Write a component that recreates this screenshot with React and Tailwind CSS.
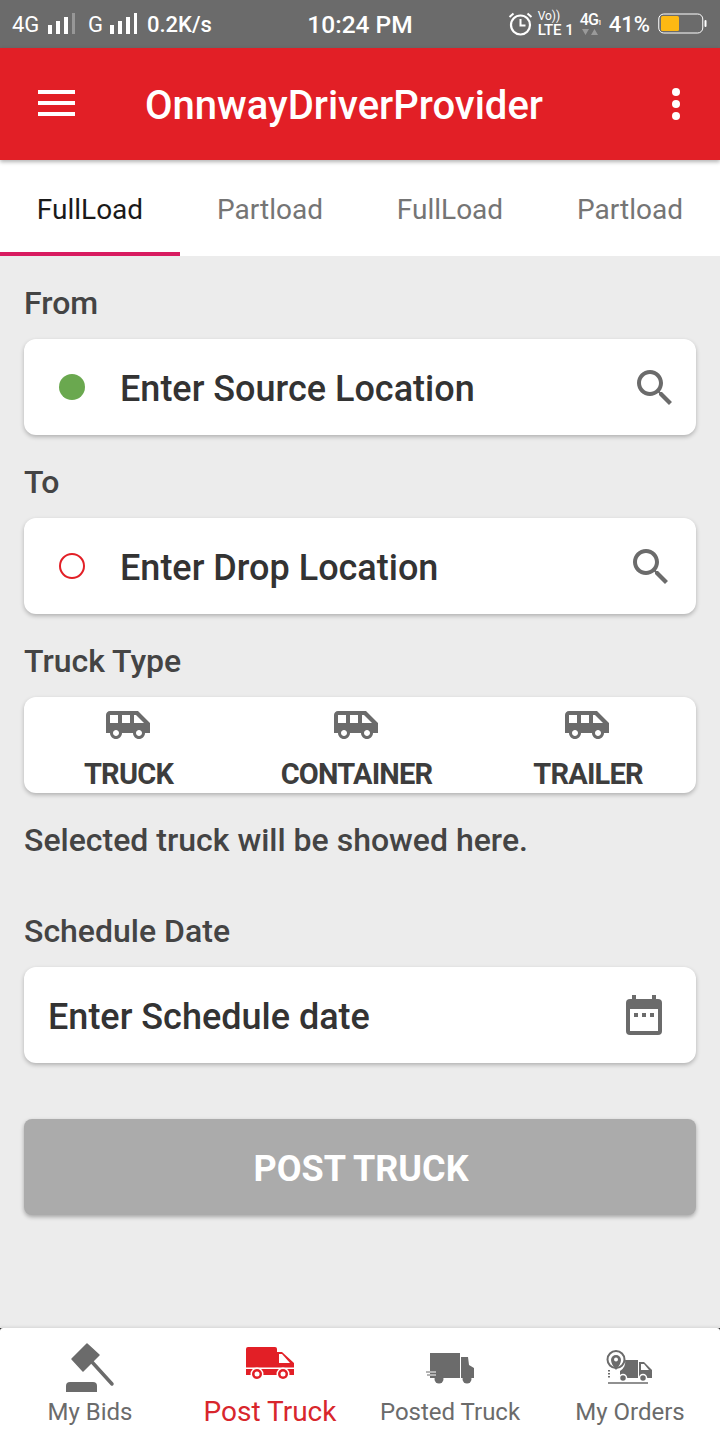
const SEARCH_PATH = 'M15.5 14h-.79l-.28-.27C15.41 12.59 16 11.11 16 9.5 16 5.91 13.09 3 9.5 3S3 5.91 3 9.5 5.91 16 9.5 16c1.61 0 3.09-.59 4.23-1.57l.27.28v.79l5 4.99L20.49 19l-4.99-5zm-6 0C7.01 14 5 11.99 5 9.5S7.01 5 9.5 5 14 7.01 14 9.5 11.99 14 9.5 14z'
const SHUTTLE_PATH = 'M17 5H3c-1.1 0-2 .89-2 2v9h2c0 1.65 1.34 3 3 3s3-1.35 3-3h5.5c0 1.65 1.34 3 3 3s3-1.35 3-3H23v-5l-6-6zM3 11V7h4v4H3zm3 6.5c-.83 0-1.5-.67-1.5-1.5s.67-1.5 1.5-1.5 1.5.67 1.5 1.5-.67 1.5-1.5 1.5zm7-6.5H9V7h4v4zm4.5 6.5c-.83 0-1.5-.67-1.5-1.5s.67-1.5 1.5-1.5 1.5.67 1.5 1.5-.67 1.5-1.5 1.5zM15 11V7h1l4 4h-5z'

const TABS = ['FullLoad', 'Partload', 'FullLoad', 'Partload']

function SignalBars({ dim }) {
  return (
    <svg width="28" height="22" viewBox="0 0 28 22" fill="#fff">
      <rect x="0" y="12" width="4" height="9" />
      <rect x="8" y="8" width="4" height="13" />
      <rect x="16" y="4" width="4" height="17" />
      <rect x="24" y="0" width="3" height="21" fillOpacity={dim ? 0.3 : 1} />
    </svg>
  )
}

function StatusBar() {
  return (
    <div className="h-12 bg-[#6b6b6b] text-white grid grid-cols-[1fr_auto_1fr] items-center shrink-0">
      <div className="flex items-center pl-3 text-[22px] font-medium">
        <span className="font-normal w-[28px]">4G</span>
        <span className="ml-2"><SignalBars dim /></span>
        <span className="ml-3 font-normal w-[14px]">G</span>
        <span className="ml-2"><SignalBars /></span>
        <span className="ml-[9px]">0.2K/s</span>
      </div>
      <div className="text-[24.5px] font-medium pt-[2px]">10:24 PM</div>
      <div className="flex items-center justify-end pr-3">
        <svg width="25" height="26" viewBox="0 0 25 26" fill="none" stroke="#fff">
          <circle cx="12.5" cy="14" r="9.5" strokeWidth="2.2" />
          <path d="M12.5 8v6.5h5M1.5 6l4-3.5M23.5 6l-4-3.5" strokeWidth="2" />
        </svg>
        <div className="ml-[5px] flex flex-col leading-none">
          <span className="text-[12px] h-[13px]">Vo))</span>
          <span className="text-[15px] font-medium">LTE 1</span>
        </div>
        <div className="ml-[6px] flex flex-col items-center leading-none">
          <span className="text-[16px] font-medium tracking-[-1px]">4G<span className="text-[7px]">1</span></span>
          <svg width="16" height="8" viewBox="0 0 16 8" fill="#9a9a9a">
            <path d="M0 1h7L3.5 7zM9 7h7l-3.5-6z" />
          </svg>
        </div>
        <span className="ml-2 text-[22px] font-medium">41%</span>
        <svg className="ml-2" width="50" height="22" viewBox="0 0 50 22">
          <rect x="0.75" y="1" width="44" height="19" rx="5" fill="none" stroke="#fff" strokeWidth="1" />
          <rect x="3" y="3" width="18" height="15" rx="1.5" fill="#fdb913" />
          <rect x="46.5" y="7" width="2" height="7" rx="1" fill="#fff" />
        </svg>
      </div>
    </div>
  )
}

function AppBar() {
  return (
    <div className="h-28 bg-[#e21f26] text-white flex items-center relative z-10 shadow-[0_2px_4px_rgba(0,0,0,0.3)] shrink-0">
      <div className="ml-[38px] mb-[2px] w-[37px] flex flex-col gap-[7px]">
        <span className="h-1 bg-white" />
        <span className="h-1 bg-white" />
        <span className="h-1 bg-white" />
      </div>
      <div className="ml-[70px] pt-1 text-[40px] font-medium">OnnwayDriverProvider</div>
      <div className="ml-auto mr-10 flex flex-col gap-[4px]">
        <span className="w-2 h-2 rounded-full bg-white" />
        <span className="w-2 h-2 rounded-full bg-white" />
        <span className="w-2 h-2 rounded-full bg-white" />
      </div>
    </div>
  )
}

function SearchIcon({ className }) {
  return (
    <svg className={className} width="35" height="35" viewBox="3 3 17.5 17.5" fill="#6b6b6b">
      <path d={SEARCH_PATH} />
    </svg>
  )
}

function LocationField({ marker, text, searchClass }) {
  return (
    <div className="h-24 bg-white rounded-xl shadow-[0_2px_4px_rgba(0,0,0,0.25)] flex items-center pl-[35px]">
      {marker}
      <span className="ml-[35px] pt-1 text-[36px] font-medium text-[#333]">{text}</span>
      <SearchIcon className={searchClass} />
    </div>
  )
}

function FieldLabel({ children, className }) {
  return <div className={`text-[32px] leading-[35px] font-medium text-[#444] mb-[18px] ${className}`}>{children}</div>
}

function TruckOption({ label }) {
  return (
    <div className="flex flex-col items-center">
      <svg className="mt-[14px] mr-[2px]" width="44" height="28" viewBox="1 5 22 14" fill="#6b6b6b">
        <path d={SHUTTLE_PATH} />
      </svg>
      <span className="mt-[17px] text-[29px] leading-[36px] font-bold text-[#3d3d3d] tracking-[-0.8px]">{label}</span>
    </div>
  )
}

function GavelIcon() {
  return (
    <svg width="60" height="56" viewBox="0 0 60 56" fill="#6b6b6b">
      <path d="M27 4l12 11-16 16-11-12z" stroke="#6b6b6b" strokeWidth="1.5" strokeLinejoin="round" />
      <path d="M32 22l20 22" stroke="#6b6b6b" strokeWidth="3.5" strokeLinecap="round" />
      <path d="M6 52v-6a4 4 0 0 1 4-4h23a4 4 0 0 1 4 4v6z" />
    </svg>
  )
}

function RedVanIcon() {
  return (
    <svg width="60" height="56" viewBox="0 0 60 56" fill="#e21f26">
      <path d="M8 7h27a2 2 0 0 1 2 2v3h5l12 11v12H6V9a2 2 0 0 1 2-2z" />
      <path d="M39 14h3l8 9H39z" fill="#fff" />
      <rect x="6" y="27.5" width="48" height="1.5" fill="#fff" />
      <circle cx="17" cy="34" r="6.5" fill="#fff" />
      <circle cx="43" cy="34" r="6.5" fill="#fff" />
      <circle cx="17" cy="34" r="5" />
      <circle cx="43" cy="34" r="5" />
      <circle cx="17" cy="34" r="2.5" fill="#fff" />
      <circle cx="43" cy="34" r="2.5" fill="#fff" />
    </svg>
  )
}

function BoxTruckIcon() {
  return (
    <svg width="60" height="56" viewBox="0 0 60 56" fill="#6b6b6b">
      <path d="M10 13h30v25H10z" />
      <path d="M41 17h7l1 8 5 3v10H41z" />
      <circle cx="19" cy="39" r="4.5" />
      <circle cx="47" cy="39" r="4.5" />
      <path d="M10 32h6M10 35h6" stroke="#fff" strokeWidth="1" />
      <path d="M6 32h4M7 35h3" stroke="#6b6b6b" strokeWidth="1" />
    </svg>
  )
}

function OrdersIcon() {
  return (
    <svg width="60" height="56" viewBox="0 0 60 56" fill="#6b6b6b">
      <path d="M25 20h13v18H20v-7a10 10 0 0 0 5-11z" />
      <path d="M39 22h5l8 8v8H39zM41 24v6h8l-5-6z" fillRule="evenodd" />
      <circle cx="16" cy="19.5" r="8.5" fill="#fff" stroke="#6b6b6b" strokeWidth="2" />
      <path d="M16 30c-3-4-5-7-5-10a5 5 0 0 1 10 0c0 3-2 6-5 10z" />
      <circle cx="16" cy="19.5" r="2" fill="#fff" />
      <circle cx="23" cy="38" r="3.5" stroke="#fff" strokeWidth="1.5" />
      <circle cx="43" cy="38" r="3.5" stroke="#fff" strokeWidth="1.5" />
      <path d="M8 43h40" stroke="#6b6b6b" strokeWidth="1.5" />
      <path d="M9 30v8" stroke="#6b6b6b" strokeWidth="2" strokeDasharray="1.5 1.5" />
    </svg>
  )
}

function NavItem({ icon, label, active }) {
  return (
    <div className="flex-1 flex flex-col items-center pt-3">
      {icon}
      <span className={active ? 'text-[28px] leading-8 text-[#d8262c]' : 'text-[24px] leading-8 text-[#6b6b6b]'}>{label}</span>
    </div>
  )
}

export default function App() {
  return (
    <div className="w-[720px] h-[1440px] flex flex-col overflow-hidden bg-[#ececec] font-[Roboto,sans-serif]">
      <StatusBar />
      <AppBar />

      {/* Tabs */}
      <div className="h-24 bg-white flex shrink-0">
        {TABS.map((tab, i) => (
          <div
            key={i}
            className={`w-[180px] flex items-center justify-center text-[28px] ${
              i === 0 ? 'pt-2 text-[#1a1a1a] border-b-4 border-[#d81b60]' : 'pt-1 text-[#757575]'
            }`}
          >
            {tab}
          </div>
        ))}
      </div>

      <div className="flex-1 px-6">
        <FieldLabel className="mt-[30px]">From</FieldLabel>
        <LocationField
          marker={<span className="w-[26px] h-[26px] rounded-full bg-[#6aa84f]" />}
          text="Enter Source Location"
          searchClass="ml-auto mr-6"
        />

        <FieldLabel className="mt-[30px]">To</FieldLabel>
        <LocationField
          marker={<span className="w-[26px] h-[26px] rounded-full border-[2.5px] border-[#e21f26]" />}
          text="Enter Drop Location"
          searchClass="ml-auto mr-7"
        />

        <FieldLabel className="mt-[30px]">Truck Type</FieldLabel>
        <div className="h-24 bg-white rounded-xl shadow-[0_2px_4px_rgba(0,0,0,0.25)] grid grid-cols-[209px_247px_216px]">
          <TruckOption label="TRUCK" />
          <TruckOption label="CONTAINER" />
          <TruckOption label="TRAILER" />
        </div>

        <div className="mt-[30px] text-[32px] leading-[35px] font-medium text-[#444]">Selected truck will be showed here.</div>

        <FieldLabel className="mt-14">Schedule Date</FieldLabel>
        <div className="h-24 bg-white rounded-xl shadow-[0_2px_4px_rgba(0,0,0,0.25)] flex items-center justify-between pl-6 pr-[34px]">
          <span className="pt-1 text-[36px] font-medium text-[#333]">Enter Schedule date</span>
          <svg width="36" height="40" viewBox="0 0 36 40" fill="#6b6b6b">
            <rect x="6" y="0" width="4" height="6" />
            <rect x="26" y="0" width="4" height="6" />
            <rect x="0" y="4" width="36" height="36" rx="4" />
            <rect x="4" y="14" width="28" height="22" fill="#fff" />
            <rect x="8" y="18" width="4" height="4" />
            <rect x="16" y="18" width="4" height="4" />
            <rect x="24" y="18" width="4" height="4" />
          </svg>
        </div>

        <div className="mt-14 h-24 rounded-lg bg-[#ababab] shadow-[0_2px_4px_rgba(0,0,0,0.3)] flex items-center justify-center pt-1 pl-[2px] text-white text-[36px] font-bold">
          POST TRUCK
        </div>
      </div>

      {/* Bottom nav */}
      <div className="h-28 bg-[#222] shrink-0 shadow-[0_-1px_3px_rgba(0,0,0,0.1)]">
        <div className="h-full bg-white rounded-t-[3px] flex">
          <NavItem icon={<GavelIcon />} label="My Bids" />
          <NavItem icon={<RedVanIcon />} label="Post Truck" active />
          <NavItem icon={<BoxTruckIcon />} label="Posted Truck" />
          <NavItem icon={<OrdersIcon />} label="My Orders" />
        </div>
      </div>
    </div>
  )
}
